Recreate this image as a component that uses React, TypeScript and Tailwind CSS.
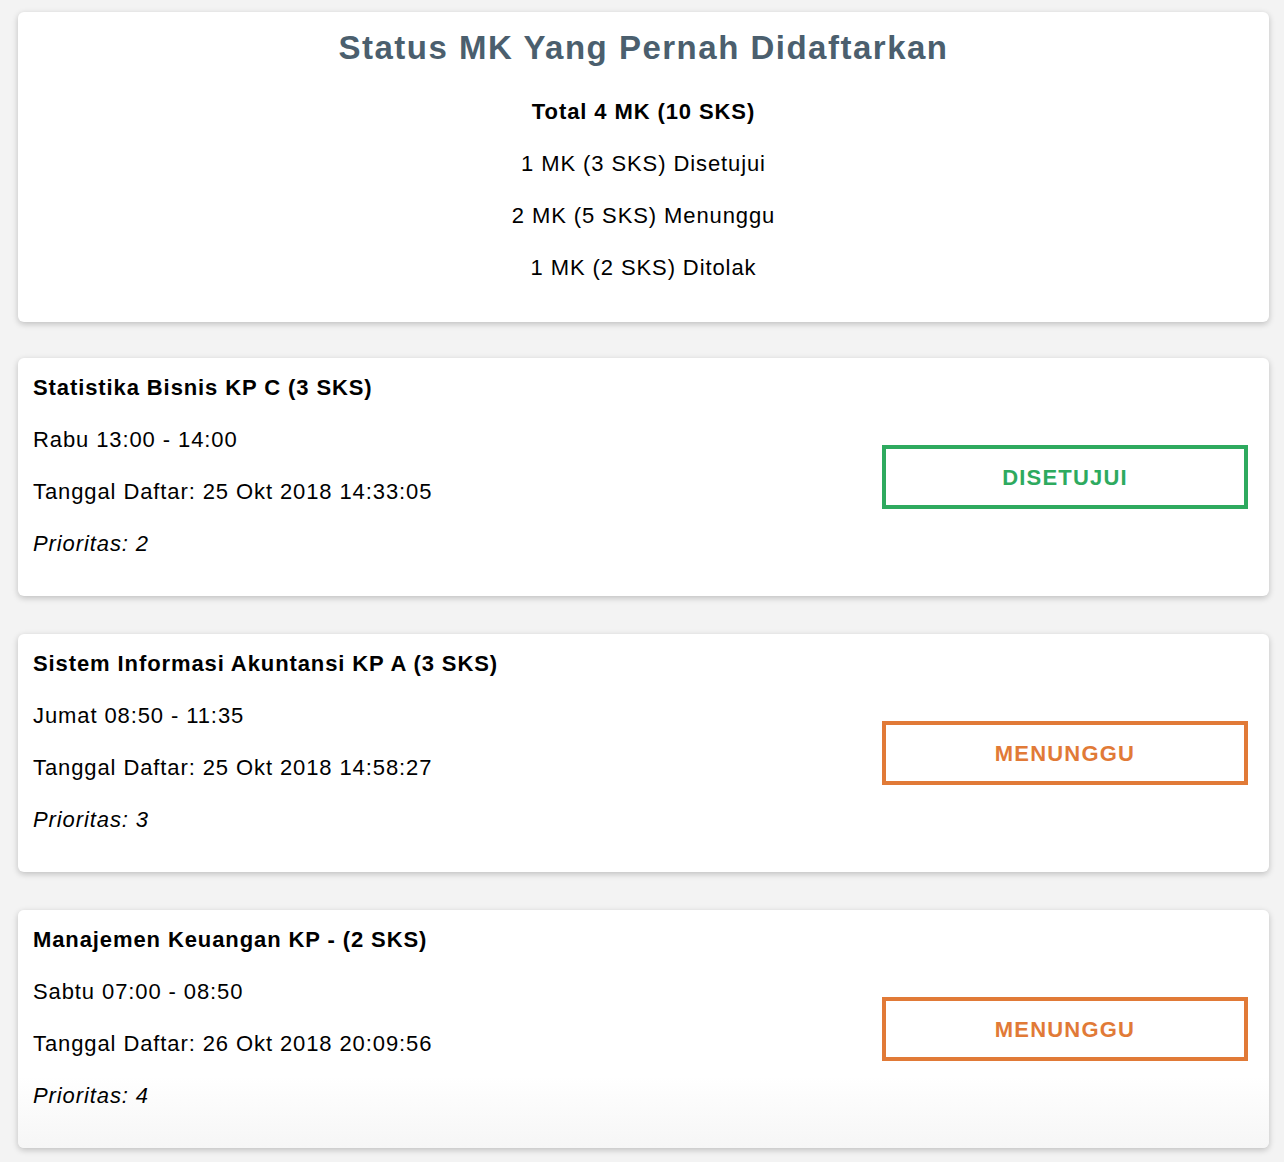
import React from "react";

type Course = {
  title: string;
  time: string;
  date: string;
  prio: number;
  status: "DISETUJUI" | "MENUNGGU";
};

const courses: Course[] = [
  { title: "Statistika Bisnis KP C (3 SKS)", time: "Rabu 13:00 - 14:00", date: "Tanggal Daftar: 25 Okt 2018 14:33:05", prio: 2, status: "DISETUJUI" },
  { title: "Sistem Informasi Akuntansi KP A (3 SKS)", time: "Jumat 08:50 - 11:35", date: "Tanggal Daftar: 25 Okt 2018 14:58:27", prio: 3, status: "MENUNGGU" },
  { title: "Manajemen Keuangan KP - (2 SKS)", time: "Sabtu 07:00 - 08:50", date: "Tanggal Daftar: 26 Okt 2018 20:09:56", prio: 4, status: "MENUNGGU" },
];

function CourseCard({ c, first, last }: { c: Course; first: boolean; last: boolean }) {
  const green = c.status === "DISETUJUI";
  return (
    <div
      className={`${first ? "mt-[36px]" : "mt-[38px]"} flex h-[238px] items-center rounded-[6px] shadow-[0_2px_6px_rgba(0,0,0,0.22)] ${
        last ? "bg-gradient-to-b from-white from-70% to-[#f6f6f6]" : "bg-white"
      }`}
    >
      <div className="flex h-full flex-1 flex-col gap-[29px] pl-[15px] pt-[18px] text-[22px] leading-[23px] tracking-[0.9px] text-black">
        <div className="font-bold">{c.title}</div>
        <div>{c.time}</div>
        <div>{c.date}</div>
        <div className="italic">Prioritas: {c.prio}</div>
      </div>
      <div
        className={`mr-[21px] flex h-[64px] w-[366px] items-center justify-center border-[4px] text-[22px] font-bold tracking-[1.2px] ${
          green ? "border-[#2eaa5f] text-[#2eaa5f]" : "border-[#e17a37] text-[#e17a37]"
        }`}
      >
        {c.status}
      </div>
    </div>
  );
}

export default function App() {
  return (
    <div
      className="min-h-[1162px] bg-[#f3f3f3] pb-[15px] pl-[18px] pr-[15px] pt-[12px]"
      style={{ fontFamily: '"Liberation Sans", Arial, sans-serif' }}
    >
      <div className="flex h-[310px] flex-col items-center rounded-[6px] bg-white pt-[17px] shadow-[0_2px_6px_rgba(0,0,0,0.22)]">
        <h1 className="text-[33px] font-bold leading-[37px] tracking-[1.5px] text-[#4b5f6e]">
          Status MK Yang Pernah Didaftarkan
        </h1>
        <div className="mt-[34px] flex flex-col items-center gap-[29px] text-[22px] leading-[23px] tracking-[0.9px] text-black">
          <div className="font-bold">Total 4 MK (10 SKS)</div>
          <div>1 MK (3 SKS) Disetujui</div>
          <div>2 MK (5 SKS) Menunggu</div>
          <div>1 MK (2 SKS) Ditolak</div>
        </div>
      </div>
      {courses.map((c, i) => (
        <CourseCard key={i} c={c} first={i === 0} last={i === courses.length - 1} />
      ))}
    </div>
  );
}
